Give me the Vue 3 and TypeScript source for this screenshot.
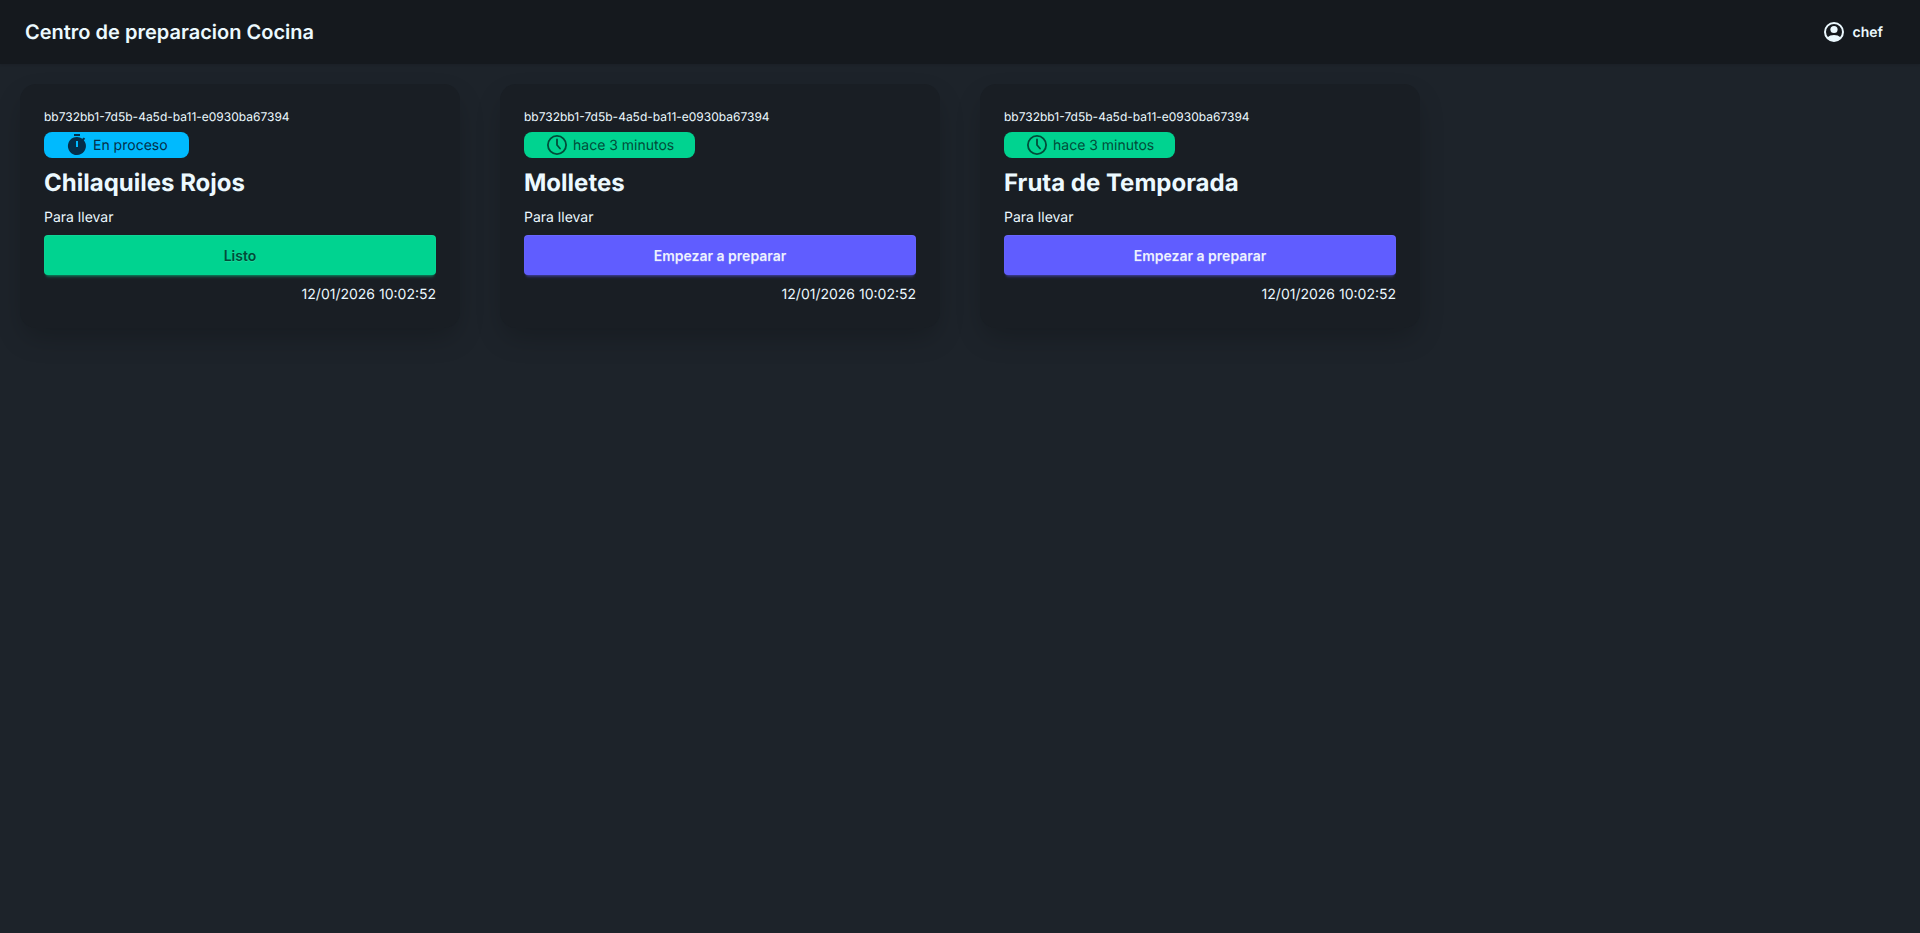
<script setup lang="ts">
interface Order {
  name: string;
  inProgress: boolean;
}

const orderId = 'bb732bb1-7d5b-4a5d-ba11-e0930ba67394';
const orders: Order[] = [
  { name: 'Chilaquiles Rojos', inProgress: true },
  { name: 'Molletes', inProgress: false },
  { name: 'Fruta de Temporada', inProgress: false },
];
</script>

<template>
  <div class="page">
    <header class="navbar">
      <span class="brand">Centro de preparacion Cocina</span>
      <div class="user">
        <svg class="user-icon" viewBox="0 0 24 24" fill="currentColor">
          <circle cx="12" cy="12" r="9" fill="none" stroke="currentColor" stroke-width="2" />
          <circle cx="12" cy="9.5" r="3.6" />
          <path d="M5.4 17.6C7 15.8 9.4 15 12 15s5 .8 6.6 2.6A9.5 9.5 0 0 1 12 21a9.5 9.5 0 0 1-6.6-3.4Z" />
        </svg>
        <span>chef</span>
      </div>
    </header>

    <main class="grid">
      <div v-for="order in orders" :key="order.name" class="cell">
        <article class="card">
          <p class="order-id">{{ orderId }}</p>
          <div v-if="order.inProgress" class="badge badge-info">
            <svg class="badge-icon" viewBox="0 0 24 24" fill="currentColor">
              <path fill-rule="evenodd" d="M9 1h6v2H9zM12 4a9 9 0 0 1 5.4 1.8l1.4-1.4 1.4 1.4-1.4 1.4A9 9 0 1 1 12 4Zm-1 4v6h2V8h-2Z" />
            </svg>
            <span>En proceso</span>
          </div>
          <div v-else class="badge badge-success">
            <svg class="badge-icon" viewBox="0 0 24 24" fill="none" stroke="currentColor" stroke-width="1.8" stroke-linecap="round">
              <circle cx="12" cy="12" r="9.1" />
              <path d="M12 6.5V12l3 3.5" />
            </svg>
            <span>hace 3 minutos</span>
          </div>
          <h2 class="title">{{ order.name }}</h2>
          <p class="kind">Para llevar</p>
          <button class="btn" :class="order.inProgress ? 'btn-success' : 'btn-primary'">
            {{ order.inProgress ? 'Listo' : 'Empezar a preparar' }}
          </button>
          <p class="date">12/01/2026 10:02:52</p>
        </article>
      </div>
    </main>
  </div>
</template>

<style>
html,
body {
  margin: 0;
  background: #1d232a;
}
</style>

<style scoped>
.page {
  min-height: 933px;
  background: #1d232a;
  color: #ecf9ff;
  font-family: Inter, "Noto Sans", sans-serif;
  font-size: 14px;
  text-rendering: geometricPrecision;
  -webkit-font-smoothing: antialiased;
}
.navbar {
  display: flex;
  align-items: center;
  justify-content: space-between;
  height: 64px;
  box-sizing: border-box;
  padding: 0 37px 0 25px;
  background: #15191e;
  box-shadow: 0 1px 2px rgba(0, 0, 0, 0.1);
}
.brand {
  font-size: 20px;
  font-weight: 600;
}
.user {
  display: flex;
  align-items: center;
  gap: 7px;
  font-weight: 600;
}
.user-icon {
  width: 24px;
  height: 24px;
}
.grid {
  display: grid;
  grid-template-columns: repeat(4, 1fr);
}
.cell {
  padding: 20px;
}
.card {
  display: flex;
  flex-direction: column;
  gap: 8px;
  padding: 24px 24px 23px;
  border-radius: 16px;
  background: #191e24;
  box-shadow: 0 12px 28px -4px rgba(0, 0, 0, 0.22);
}
.order-id {
  margin: 0 0 -2px;
  font-size: 12px;
  line-height: 18px;
}
.badge {
  display: flex;
  align-items: center;
  justify-content: center;
  gap: 4px;
  align-self: flex-start;
  height: 26px;
  padding: 0 21px;
  border-radius: 8px;
}
.badge-icon {
  width: 24px;
  height: 24px;
}
.badge-info {
  background: #00bafe;
  color: #042e49;
}
.badge-success {
  background: #00d390;
  color: #004c39;
}
.title {
  margin: 1px 0 0;
  font-size: 24px;
  line-height: 32px;
  font-weight: 700;
}
.kind {
  margin: 0 0 -1px;
  padding-top: 1px;
  line-height: 20px;
}
.btn {
  height: 40px;
  border: none;
  border-radius: 4px;
  font-family: inherit;
  font-size: 14px;
  font-weight: 600;
  text-shadow: 0 0.5px rgba(255, 255, 255, 0.15);
  cursor: pointer;
}
.btn-success {
  background: #00d390;
  color: #004c39;
  box-shadow: inset 0 0.5px 0 0.5px rgba(255, 255, 255, 0.06), 0 3px 2px -2px rgba(0, 211, 144, 0.3), 0 4px 3px -2px rgba(0, 211, 144, 0.3);
}
.btn-primary {
  background: #605dff;
  color: #edf1fe;
  box-shadow: inset 0 0.5px 0 0.5px rgba(255, 255, 255, 0.06), 0 3px 2px -2px rgba(96, 93, 255, 0.3), 0 4px 3px -2px rgba(96, 93, 255, 0.3);
}
.date {
  margin: 2px 0 0;
  text-align: right;
  line-height: 20px;
}
</style>
